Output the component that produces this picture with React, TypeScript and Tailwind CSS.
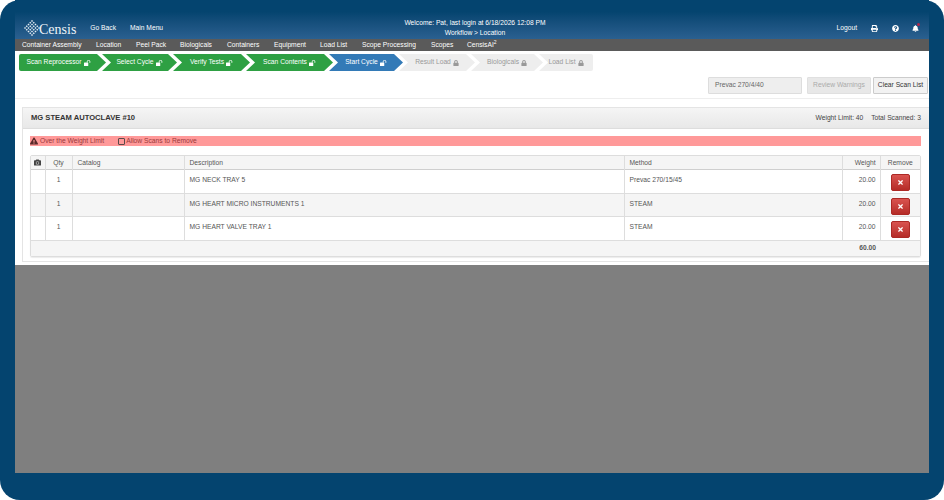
import { FaBell, FaCamera, FaExclamationTriangle, FaLock, FaPrint, FaQuestionCircle, FaTimes } from 'react-icons/fa'

const navItems = [
  { label: 'Container Assembly', w: 'w-[74px]' },
  { label: 'Location', w: 'w-[40px]' },
  { label: 'Peel Pack', w: 'w-[44px]' },
  { label: 'Biologicals', w: 'w-[47px]' },
  { label: 'Containers', w: 'w-[47px]' },
  { label: 'Equipment', w: 'w-[46px]' },
  { label: 'Load List', w: 'w-[42px]' },
  { label: 'Scope Processing', w: 'w-[69px]' },
  { label: 'Scopes', w: 'w-[36px]' },
]

const rows = [
  { desc: 'MG NECK TRAY 5', method: 'Prevac 270/15/45', alt: false, h: 'h-[24px]' },
  { desc: 'MG HEART MICRO INSTRUMENTS 1', method: 'STEAM', alt: true, h: 'h-[23px]' },
  { desc: 'MG HEART VALVE TRAY 1', method: 'STEAM', alt: false, h: 'h-[24px]' },
]

function Logo() {
  const dots: [number, number][] = []
  for (let u = -2; u <= 2; u++) {
    for (let v = -2; v <= 2; v++) {
      dots.push([8 + (u - v) * 1.75, 8 + (u + v) * 1.75])
    }
  }
  return (
    <svg width="16" height="16" viewBox="0 0 16 16">
      {dots.map(([x, y]) => (
        <rect key={`${x}-${y}`} x={x - 0.75} y={y - 0.75} width="1.5" height="1.5" fill="#e6eef5" transform={`rotate(45 ${x} ${y})`} />
      ))}
    </svg>
  )
}

// open padlock, the package one closes up at this size
function OpenLock() {
  return (
    <svg width="7" height="6" viewBox="0 0 14 12" fill="none">
      <rect x="0" y="5" width="8.5" height="7" rx="1" fill="currentColor" />
      <path d="M6.5 5V3.2a2.6 2.6 0 0 1 5.2 0V5.5" stroke="currentColor" strokeWidth="1.8" />
    </svg>
  )
}

function Step({ label, cls, left, first, last, locked }: { label: string; cls: string; left: string; first?: boolean; last?: boolean; locked?: boolean }) {
  const shape = first
    ? '[clip-path:polygon(0_0,calc(100%-9px)_0,100%_50%,calc(100%-9px)_100%,0_100%)] rounded-l-[2px]'
    : last
      ? '[clip-path:polygon(0_0,100%_0,100%_100%,0_100%,9px_50%)] rounded-r-[2px]'
      : '[clip-path:polygon(0_0,calc(100%-9px)_0,100%_50%,calc(100%-9px)_100%,0_100%,9px_50%)]'
  return (
    <div className={`h-[17px] flex items-center justify-center gap-[2px] text-[6.7px] ${shape} ${cls} ${left}`}>
      {label}
      {locked ? <FaLock className="w-[6px] h-[6px]" /> : <OpenLock />}
    </div>
  )
}

export default function App() {
  return (
    <div className="w-[944px] h-[500px] bg-white font-['Liberation_Sans',Arial,sans-serif] overflow-hidden">
      <div className="w-full h-full rounded-[20px] bg-[#04446f] px-[15px] pb-[27px] flex flex-col">
        {/* top bar */}
        <div className="h-[39px] shrink-0 bg-gradient-to-b from-[#04446f] from-30% to-[#2a6090] flex text-white text-[6.7px]">
          <div className="w-[340px] flex items-center pt-[17px] pl-[9px]">
            <Logo />
            <span className="font-['Liberation_Serif',serif] text-[14px] leading-[14px] text-[#eef3f8] ml-[-1px] mt-[3px]">Censis</span>
            <span className="ml-[14px]">Go Back</span>
            <span className="ml-[14px]">Main Menu</span>
          </div>
          <div className="w-[240px] pt-[18px] text-center leading-[10px]">
            <div>Welcome: Pat, last login at 6/18/2026 12:08 PM</div>
            <div>Workflow &gt; Location</div>
          </div>
          <div className="flex-1 flex items-center justify-end pt-[17px] pr-[10px]">
            <span>Logout</span>
            <FaPrint className="ml-[14px] w-[7px] h-[7px]" />
            <FaQuestionCircle className="ml-[14px] w-[7px] h-[7px]" />
            <span className="ml-[13px] relative">
              <FaBell className="w-[7px] h-[7px]" />
              <span className="absolute -top-[2px] -right-[1px] w-[3px] h-[3px] rounded-full bg-[#b3264a]" />
            </span>
          </div>
        </div>

        {/* nav */}
        <div className="h-[12px] shrink-0 bg-[#5a5a5a] flex items-center pl-[7px] text-white text-[6.7px] whitespace-nowrap">
          {navItems.map(n => (
            <span key={n.label} className={n.w}>{n.label}</span>
          ))}
          <span>CensisAI<sup className="text-[5px]">2</sup></span>
        </div>

        {/* content */}
        <div className="h-[214px] shrink-0 bg-white flex flex-col">
          <div className="flex pt-[3px] pl-[4px]">
            <Step first label="Scan Reprocessor" cls="w-[87px] bg-[#2ea043] text-white pr-[8px]" left="" />
            <Step label="Select Cycle" cls="w-[75px] bg-[#2ea043] text-white" left="-ml-[4px]" />
            <Step label="Verify Tests" cls="w-[77px] bg-[#2ea043] text-white" left="-ml-[4px]" />
            <Step label="Scan Contents" cls="w-[87px] bg-[#2ea043] text-white" left="-ml-[4px]" />
            <Step label="Start Cycle" cls="w-[74px] bg-[#337ab7] text-white" left="-ml-[4px]" />
            <Step locked label="Result Load" cls="w-[76px] bg-[#eeeeee] text-[#999999]" left="-ml-[4px]" />
            <Step locked label="Biologicals" cls="w-[72px] bg-[#eeeeee] text-[#999999]" left="-ml-[4px]" />
            <Step last locked label="Load List" cls="w-[54px] bg-[#eeeeee] text-[#999999]" left="-ml-[4px]" />
          </div>

          <div className="flex justify-end items-start pt-[6px] h-[28px] shrink-0 border-b border-[#eeeeee] text-[6.7px]">
            <div className="w-[94px] h-[17px] bg-[#eeeeee] border border-[#dddddd] rounded-[1px] flex items-center pl-[6px] text-[#666666]">Prevac 270/4/40</div>
            <div className="ml-[5px] w-[64px] h-[17px] bg-[#e8e8e8] border border-[#e0e0e0] rounded-[1px] flex items-center justify-center text-[#aaaaaa]">Review Warnings</div>
            <div className="ml-[2px] w-[55px] h-[17px] bg-[#f2f2f2] border border-[#cccccc] rounded-[1px] flex items-center justify-center text-[#333333]">Clear Scan List</div>
            <div className="w-[1px]" />
          </div>

          <div className="mt-[8px] ml-[7px] mb-[3px] flex-1 border border-[#e4e4e4] border-r-0 flex flex-col">
            <div className="h-[21px] shrink-0 bg-gradient-to-b from-[#f5f5f5] to-[#e8e8e8] border-b border-[#dddddd] flex items-center justify-between pl-[8px] pr-[8px]">
              <span className="text-[7.6px] font-bold text-[#333333]">MG STEAM AUTOCLAVE #10</span>
              <span className="text-[6.7px] text-[#444444]">Weight Limit: 40 <span className="ml-[6px]">Total Scanned: 3</span></span>
            </div>
            <div className="mt-[7px] ml-[7px] mr-[8px] h-[10px] shrink-0 bg-[#ff9999] flex items-center text-[6.7px] text-[#9a3a3a]">
              <FaExclamationTriangle className="w-[8px] h-[8px] text-[#5a2a2a] mr-[2px]" />
              Over the Weight Limit
              <span className="ml-[14px] w-[7px] h-[7px] border border-[#5a4a4a] rounded-[1px] mr-[1px]" />
              Allow Scans to Remove
            </div>
            <div className="mt-[9px] ml-[7px] mr-[8px] border border-[#dddddd] rounded-[2px] shadow-[0_1px_1px_rgba(0,0,0,0.08)]">
              <table className="w-full table-fixed border-collapse text-[6.7px] text-[#555555]">
                <colgroup>
                  <col className="w-[14px]" />
                  <col className="w-[27px]" />
                  <col className="w-[112px]" />
                  <col className="w-[440px]" />
                  <col className="w-[218px]" />
                  <col className="w-[38px]" />
                  <col className="w-[40px]" />
                </colgroup>
                <thead>
                  <tr className="h-[13px] bg-[#f5f5f5] border-b border-[#cfcfcf]">
                    <th className="border-r border-[#dddddd]"><FaCamera className="w-[7px] h-[7px] mx-auto text-[#444444]" /></th>
                    <th className="font-normal pt-[1px] border-r border-[#dddddd]">Qty</th>
                    <th className="font-normal pt-[1px] text-left pl-[5px] border-r border-[#dddddd]">Catalog</th>
                    <th className="font-normal pt-[1px] text-left pl-[5px] border-r border-[#dddddd]">Description</th>
                    <th className="font-normal pt-[1px] text-left pl-[5px] border-r border-[#dddddd]">Method</th>
                    <th className="font-normal pt-[1px] text-right pr-[4px] border-r border-[#dddddd]">Weight</th>
                    <th className="font-normal pt-[1px]">Remove</th>
                  </tr>
                </thead>
                <tbody>
                  {rows.map(r => (
                    <tr key={r.desc} className={`${r.h} ${r.alt ? 'bg-[#f5f5f5]' : 'bg-white'} border-b border-[#dddddd] align-top`}>
                      <td className="border-r border-[#dddddd]" />
                      <td className="border-r border-[#dddddd] text-center pt-[5px]">1</td>
                      <td className="border-r border-[#dddddd]" />
                      <td className="border-r border-[#dddddd] pl-[5px] pt-[5px]">{r.desc}</td>
                      <td className="border-r border-[#dddddd] pl-[5px] pt-[5px]">{r.method}</td>
                      <td className="border-r border-[#dddddd] text-right pr-[4px] pt-[5px]">20.00</td>
                      <td className="pt-[4px]">
                        <div className="mx-auto w-[19px] h-[17px] rounded-[2px] bg-gradient-to-b from-[#d9534f] to-[#b52b27] border border-[#ac2925] flex items-center justify-center">
                          <FaTimes className="w-[7px] h-[7px] text-white" />
                        </div>
                      </td>
                    </tr>
                  ))}
                  <tr className="h-[16px] bg-[#f5f5f5]">
                    <td colSpan={5} />
                    <td className="text-right pr-[4px] font-bold">60.00</td>
                    <td />
                  </tr>
                </tbody>
              </table>
            </div>
          </div>
        </div>

        {/* empty area */}
        <div className="flex-1 bg-[#7f7f7f]" />
      </div>
    </div>
  )
}
